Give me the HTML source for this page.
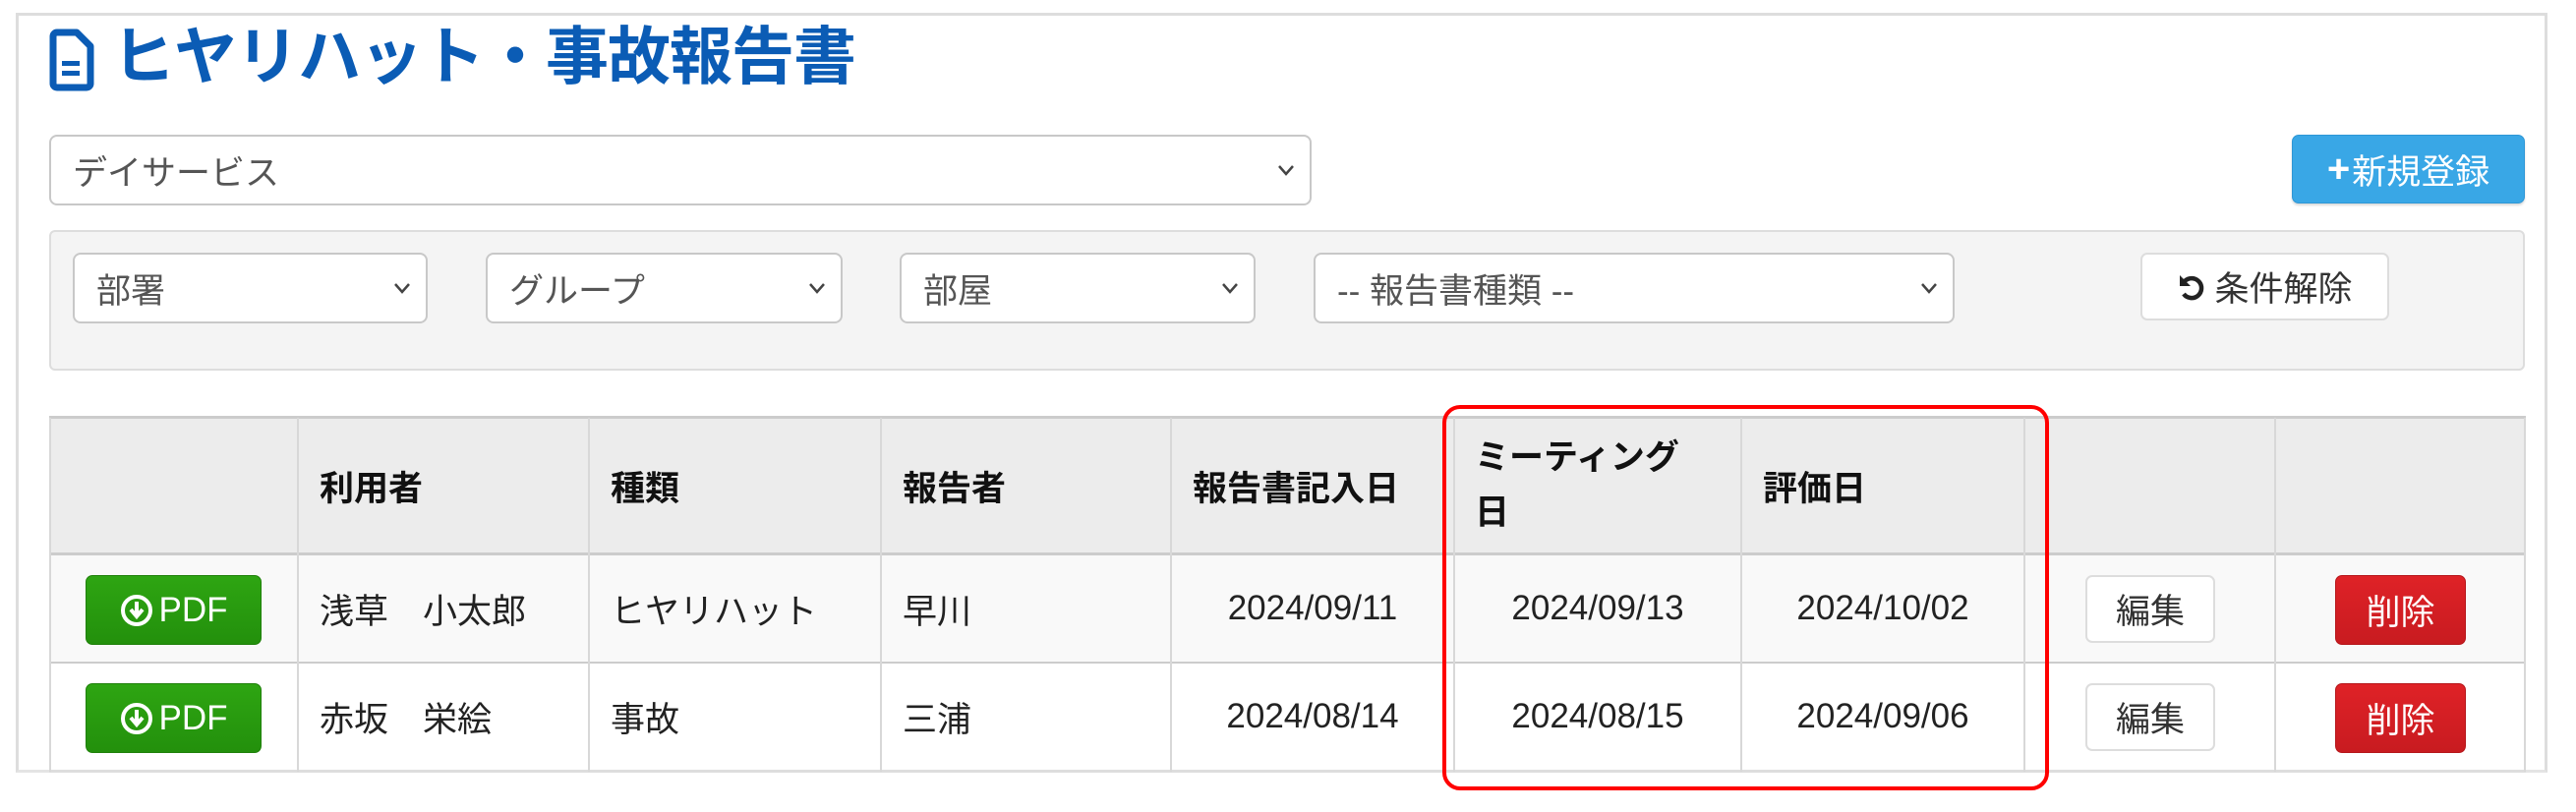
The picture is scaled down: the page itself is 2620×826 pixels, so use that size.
<!DOCTYPE html>
<html><head><meta charset="utf-8"><style>
*{box-sizing:border-box;margin:0;padding:0}
body{width:2620px;height:826px;background:#fff;font-family:"Liberation Sans","Noto Sans CJK JP",sans-serif;position:relative;overflow:hidden;color:#222}
.a{position:absolute}
.panel{left:16px;top:13px;width:2575px;height:773px;border:3px solid #ddd;border-bottom:3px solid #e4e4e4}
.title{left:114px;top:18px;font-size:64px;font-weight:bold;color:#0b5cb5;line-height:80px;letter-spacing:-1px}
.sel{background:#fff;border:2px solid #c8c8c8;border-radius:8px;font-size:35px;color:#555;padding-left:22px;display:flex;align-items:center}
.sel .ch{position:absolute;right:14px;top:50%;transform:translateY(-50%);width:20px;height:14px}
.well{left:50px;top:234px;width:2518px;height:143px;background:#f4f4f4;border:2px solid #ddd;border-radius:6px}
.btn{display:flex;align-items:center;justify-content:center;border-radius:7px;font-size:35px}
.cell{position:absolute;display:flex;align-items:center;font-size:35px}
.h{font-weight:bold;color:#111}
.vl{position:absolute;width:2px;background:#d8d8d8}
.hl{position:absolute;height:3px;background:#ccc;left:50px;width:2519px}
</style></head><body>
<div class="a panel"></div>
<svg class="a" style="left:50px;top:29px" width="46" height="64" viewBox="0 0 46 64"><path d="M8 4h20l14 14v38a4 4 0 0 1-4 4H8a4 4 0 0 1-4-4V8a4 4 0 0 1 4-4z" fill="none" stroke="#0b5cb5" stroke-width="7" stroke-linejoin="round"/><rect x="13" y="33" width="18" height="5" fill="#0b5cb5"/><rect x="13" y="43" width="18" height="5" fill="#0b5cb5"/></svg>
<div class="a title">ヒヤリハット・事故報告書</div>

<div class="a sel" style="left:50px;top:137px;width:1284px;height:72px">デイサービス<svg class="ch" viewBox="0 0 20 14"><path d="M3 3l7 8 7-8" fill="none" stroke="#444" stroke-width="2.5"/></svg></div>
<div class="a btn" style="left:2331px;top:137px;width:237px;height:70px;background:#39a7e6;color:#fff;border:1px solid #2e97d6;box-shadow:0 2px 2px rgba(0,0,0,.15)"><b style="font-size:40px;margin-right:2px">+</b>新規登録</div>

<div class="a well"></div>
<div class="a sel" style="left:74px;top:257px;width:361px;height:72px">部署<svg class="ch" viewBox="0 0 20 14"><path d="M3 3l7 8 7-8" fill="none" stroke="#444" stroke-width="2.5"/></svg></div>
<div class="a sel" style="left:494px;top:257px;width:363px;height:72px">グループ<svg class="ch" viewBox="0 0 20 14"><path d="M3 3l7 8 7-8" fill="none" stroke="#444" stroke-width="2.5"/></svg></div>
<div class="a sel" style="left:915px;top:257px;width:362px;height:72px">部屋<svg class="ch" viewBox="0 0 20 14"><path d="M3 3l7 8 7-8" fill="none" stroke="#444" stroke-width="2.5"/></svg></div>
<div class="a sel" style="left:1336px;top:257px;width:652px;height:72px">-- 報告書種類 --<svg class="ch" viewBox="0 0 20 14"><path d="M3 3l7 8 7-8" fill="none" stroke="#444" stroke-width="2.5"/></svg></div>
<div class="a btn" style="left:2177px;top:257px;width:253px;height:69px;background:#fff;border:2px solid #ddd;color:#333"><svg width="30" height="30" viewBox="0 0 30 30" style="margin-right:8px"><path d="M8 9a10 10 0 1 1 -1 13" fill="none" stroke="#222" stroke-width="4.5"/><path d="M3 3v11h11z" fill="#222"/></svg>条件解除</div>

<!-- table -->
<div class="a" style="left:50px;top:425px;width:2519px;height:139px;background:#ececec"></div>
<div class="a" style="left:50px;top:564px;width:2519px;height:110px;background:#f9f9f9"></div>
<div class="hl" style="top:423px"></div>
<div class="hl" style="top:562px"></div>
<div class="hl" style="top:673px;height:2px"></div>
<div class="hl" style="top:783px;background:#ddd"></div>
<div class="vl" style="left:50px;top:425px;height:360px"></div>
<div class="vl" style="left:302px;top:425px;height:360px"></div>
<div class="vl" style="left:598px;top:425px;height:360px"></div>
<div class="vl" style="left:895px;top:425px;height:360px"></div>
<div class="vl" style="left:1190px;top:425px;height:360px"></div>
<div class="vl" style="left:1478px;top:425px;height:360px"></div>
<div class="vl" style="left:1770px;top:425px;height:360px"></div>
<div class="vl" style="left:2058px;top:425px;height:360px"></div>
<div class="vl" style="left:2313px;top:425px;height:360px"></div>
<div class="vl" style="left:2567px;top:425px;height:360px"></div>

<div class="cell h" style="left:325px;top:425px;height:139px">利用者</div>
<div class="cell h" style="left:621px;top:425px;height:139px">種類</div>
<div class="cell h" style="left:918px;top:425px;height:139px">報告者</div>
<div class="cell h" style="left:1213px;top:425px;height:139px">報告書記入日</div>
<div class="cell h" style="left:1500px;top:438px;width:260px;line-height:56px">ミーティング<br>日</div>
<div class="cell h" style="left:1793px;top:425px;height:139px">評価日</div>

<div class="a btn" style="left:87px;top:585px;width:179px;height:71px;background:linear-gradient(#2ea512,#23900c);color:#fff;border:1px solid #1f800a"><svg width="34" height="34" viewBox="0 0 34 34" style="margin-right:6px"><circle cx="17" cy="17" r="14" fill="none" stroke="#fff" stroke-width="4"/><path d="M17 8v13M11 16l6 7 6-7" fill="none" stroke="#fff" stroke-width="4"/></svg>PDF</div>
<div class="a btn" style="left:87px;top:695px;width:179px;height:71px;background:linear-gradient(#2ea512,#23900c);color:#fff;border:1px solid #1f800a"><svg width="34" height="34" viewBox="0 0 34 34" style="margin-right:6px"><circle cx="17" cy="17" r="14" fill="none" stroke="#fff" stroke-width="4"/><path d="M17 8v13M11 16l6 7 6-7" fill="none" stroke="#fff" stroke-width="4"/></svg>PDF</div>

<div class="cell" style="left:325px;top:564px;height:110px">浅草　小太郎</div>
<div class="cell" style="left:621px;top:564px;height:110px">ヒヤリハット</div>
<div class="cell" style="left:918px;top:564px;height:110px">早川</div>
<div class="cell" style="left:1191px;top:564px;height:110px;width:288px;justify-content:center">2024/09/11</div>
<div class="cell" style="left:1479px;top:564px;height:110px;width:292px;justify-content:center">2024/09/13</div>
<div class="cell" style="left:1771px;top:564px;height:110px;width:288px;justify-content:center">2024/10/02</div>

<div class="cell" style="left:325px;top:674px;height:110px">赤坂　栄絵</div>
<div class="cell" style="left:621px;top:674px;height:110px">事故</div>
<div class="cell" style="left:918px;top:674px;height:110px">三浦</div>
<div class="cell" style="left:1191px;top:674px;height:110px;width:288px;justify-content:center">2024/08/14</div>
<div class="cell" style="left:1479px;top:674px;height:110px;width:292px;justify-content:center">2024/08/15</div>
<div class="cell" style="left:1771px;top:674px;height:110px;width:288px;justify-content:center">2024/09/06</div>

<div class="a btn" style="left:2121px;top:585px;width:132px;height:69px;background:#fff;border:2px solid #ddd;color:#333">編集</div>
<div class="a btn" style="left:2121px;top:695px;width:132px;height:69px;background:#fff;border:2px solid #ddd;color:#333">編集</div>
<div class="a btn" style="left:2375px;top:585px;width:133px;height:71px;background:linear-gradient(#df2227,#c81b20);color:#fff;border:1px solid #b5161a">削除</div>
<div class="a btn" style="left:2375px;top:695px;width:133px;height:71px;background:linear-gradient(#df2227,#c81b20);color:#fff;border:1px solid #b5161a">削除</div>

<div class="a" style="left:1467px;top:412px;width:617px;height:392px;border:4px solid #f00;border-radius:18px"></div>
</body></html>
